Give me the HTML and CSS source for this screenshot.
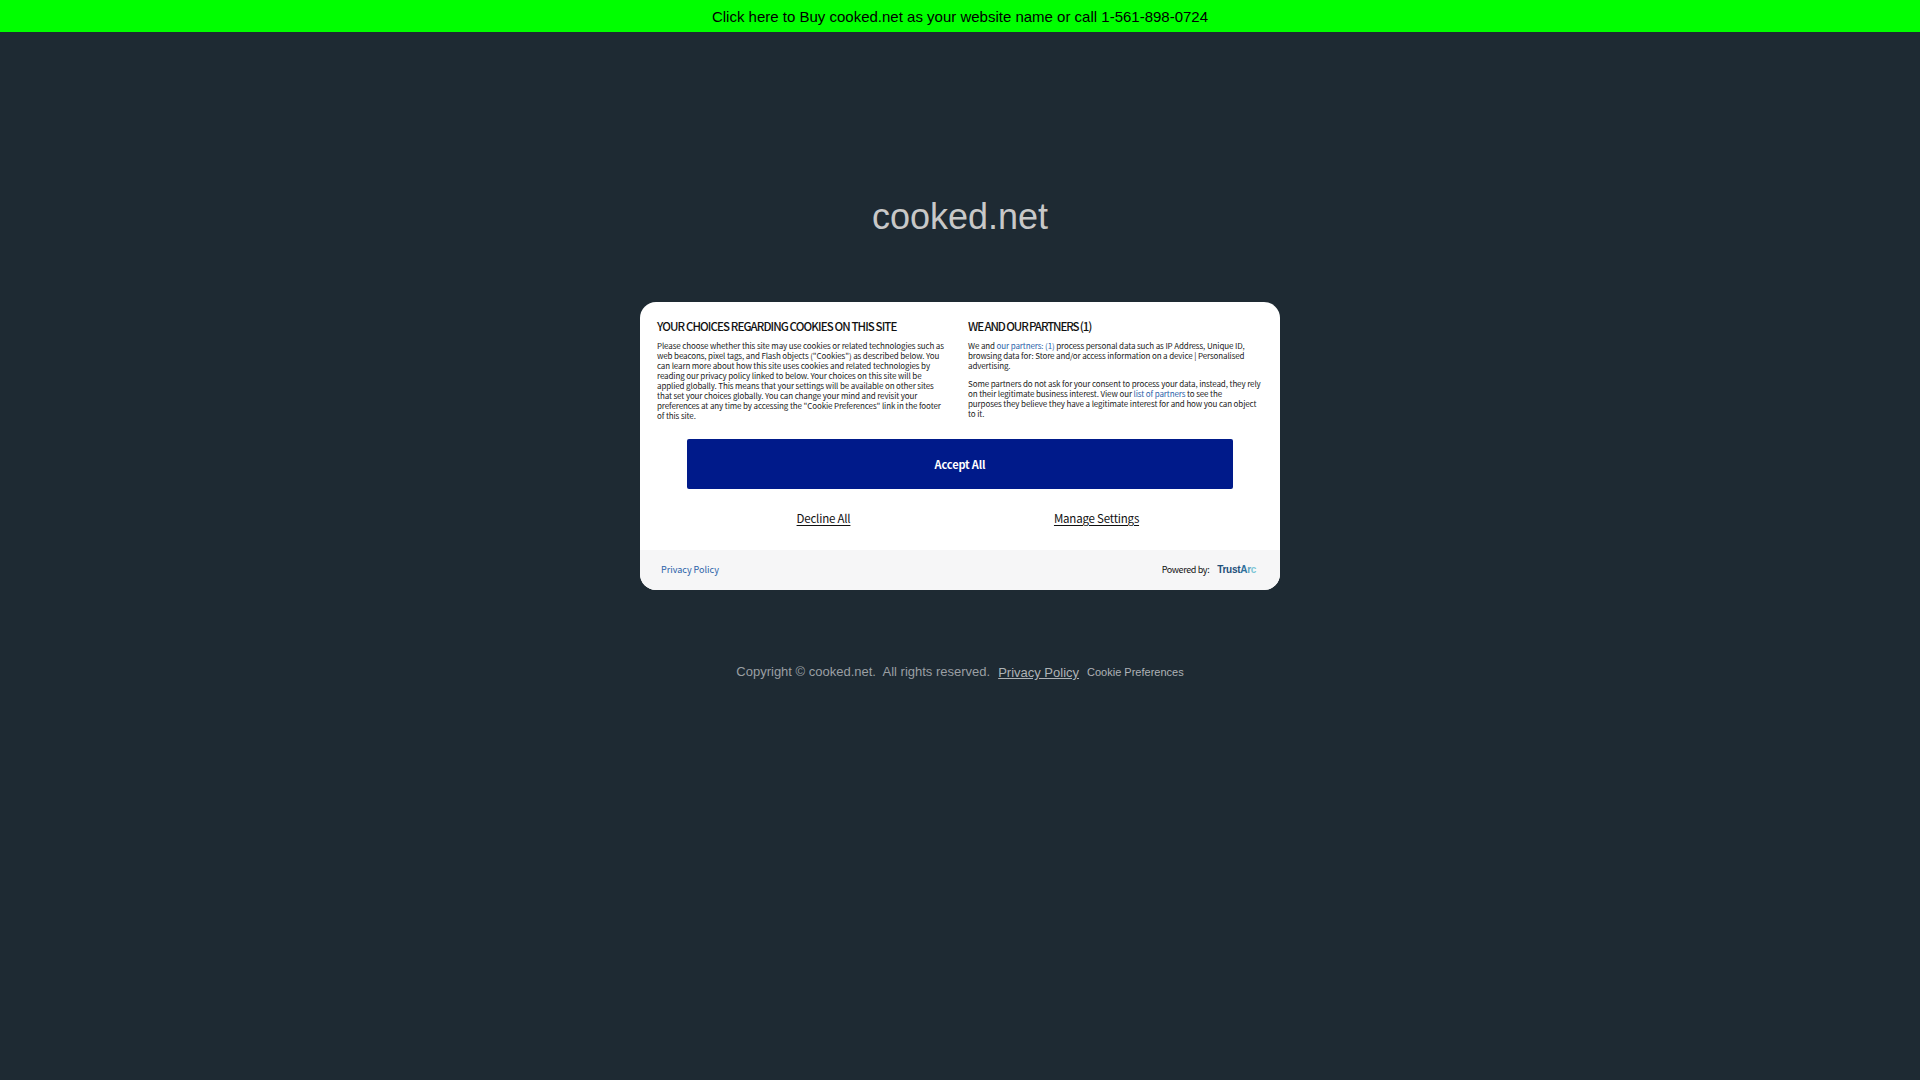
FILE: index.html
```html
<!DOCTYPE html>
<html lang="en">
<head>
<meta charset="utf-8">
<title>cooked.net</title>
<link rel="stylesheet" href="styles.css">
</head>
<body>
<div class="topbar"><a href="#">Click here to Buy cooked.net as your website name or call 1-561-898-0724</a></div>
<h1 class="domain">cooked.net</h1>
<section class="modal">
  <div class="columns">
    <div class="col col-left">
      <h2>YOUR CHOICES REGARDING COOKIES ON THIS SITE</h2>
      <p>Please choose whether this site may use cookies or related technologies such as<br>web beacons, pixel tags, and Flash objects ("Cookies") as described below. You<br>can learn more about how this site uses cookies and related technologies by<br>reading our privacy policy linked to below. Your choices on this site will be<br>applied globally. This means that your settings will be available on other sites<br>that set your choices globally. You can change your mind and revisit your<br>preferences at any time by accessing the "Cookie Preferences" link in the footer<br>of this site.</p>
    </div>
    <div class="col col-right">
      <h2>WE AND OUR PARTNERS (1)</h2>
      <p>We and <a href="#">our partners: (1)</a> process personal data such as IP Address, Unique ID,<br>browsing data for: Store and/or access information on a device | Personalised<br>advertising.</p>
      <p class="second">Some partners do not ask for your consent to process your data, instead, they rely<br>on their legitimate business interest. View our <a href="#">list of partners</a> to see the<br>purposes they believe they have a legitimate interest for and how you can object<br>to it.</p>
    </div>
  </div>
  <button class="accept">Accept All</button>
  <div class="secondary">
    <a href="#">Decline All</a>
    <a href="#">Manage Settings</a>
  </div>
  <footer class="modal-foot">
    <a class="policy" href="#">Privacy Policy</a>
    <div class="powered"><span>Powered by:</span><span class="logo">Trust<span class="logo-a">A</span><span class="logo-r">r</span><span class="logo-c">c</span></span></div>
  </footer>
</section>
<div class="copyright">
  <span>Copyright © cooked.net.&nbsp; All rights reserved.</span>
  <a class="privacy" href="#">Privacy Policy</a>
  <a class="prefs" href="#">Cookie Preferences</a>
</div>
</body>
</html>
```
FILE: styles.css
```css
* { box-sizing: border-box; }
html, body { margin: 0; height: 100%; }
body {
  background: #1e2a33;
  font-family: "Liberation Sans", Arial, sans-serif;
  overflow: hidden;
}
.topbar {
  height: 32px;
  background: #00ff00;
  text-align: center;
  font-size: 15px;
  line-height: 34px;
}
.topbar a { color: #000; text-decoration: none; }
.domain {
  margin: 0;
  padding-top: 164px;
  height: 270px;
  text-align: center;
  font-weight: 400;
  font-size: 36px;
  line-height: 42px;
  color: #c8c8c8;
}
.modal {
  width: 640px;
  height: 288px;
  margin: 0 auto;
  background: #fff;
  border-radius: 16px;
  overflow: hidden;
  display: flex;
  flex-direction: column;
  font-family: "Noto Sans CJK JP", "Noto Sans", sans-serif;
  color: #111;
}
.columns {
  display: flex;
  padding: 16px 16px 0 17px;
  height: 137px;
}
.col-left { width: 295px; margin-right: 16px; }
.col-right { width: 296px; }
.col h2 {
  margin: 0 0 7px;
  font-size: 11.5px;
  line-height: 16px;
  font-weight: 500;
  letter-spacing: -0.9px;
  color: #111;
}
.col-right h2 { letter-spacing: -1.1px; }
.col p {
  margin: 0;
  font-size: 8px;
  line-height: 10px;
  letter-spacing: -0.12px;
  white-space: nowrap;
  color: #222;
}
.col p.second { margin-top: 8px; }
.col a { color: #2b62a8; text-decoration: none; }
.accept {
  display: block;
  width: 546px;
  height: 50px;
  margin: 0 auto;
  border: 0;
  border-radius: 2px;
  background: #001a8a;
  color: #fff;
  font-family: inherit;
  font-size: 11px;
  font-weight: 700;
  letter-spacing: -0.15px;
}
.secondary {
  display: flex;
  width: 546px;
  height: 61px;
  margin: 0 auto;
  padding-top: 21px;
}
.secondary a {
  flex: 1;
  text-align: center;
  font-size: 11.5px;
  line-height: 16px;
  letter-spacing: -0.2px;
  color: #111;
  text-underline-offset: 2px;
}
.modal-foot {
  flex: 1;
  background: #f6f6f7;
  display: flex;
  align-items: center;
  justify-content: space-between;
  padding: 0 24px 2px 21px;
  font-size: 9px;
}
.policy { color: #2b62a8; text-decoration: none; }
.powered { display: flex; align-items: center; gap: 8px; color: #111; letter-spacing: -0.38px; }
.logo { font-weight: 700; font-size: 10px; color: #1f4f7a; letter-spacing: -0.3px; font-family: "Liberation Sans", sans-serif; }
.logo-a { color: #2f6f9a; }
.logo-r { color: #5fa3c0; }
.logo-c { color: #7cc6d6; }
.copyright {
  margin-top: 74px;
  display: flex;
  justify-content: center;
  align-items: flex-start;
  gap: 8px;
  font-size: 13px;
  color: #9a9fa3;
}
.privacy { padding-top: 1px; color: #aeb2b6; }
.prefs { padding-top: 2px; font-size: 11px; color: #aeb2b6; text-decoration: none; }
```
